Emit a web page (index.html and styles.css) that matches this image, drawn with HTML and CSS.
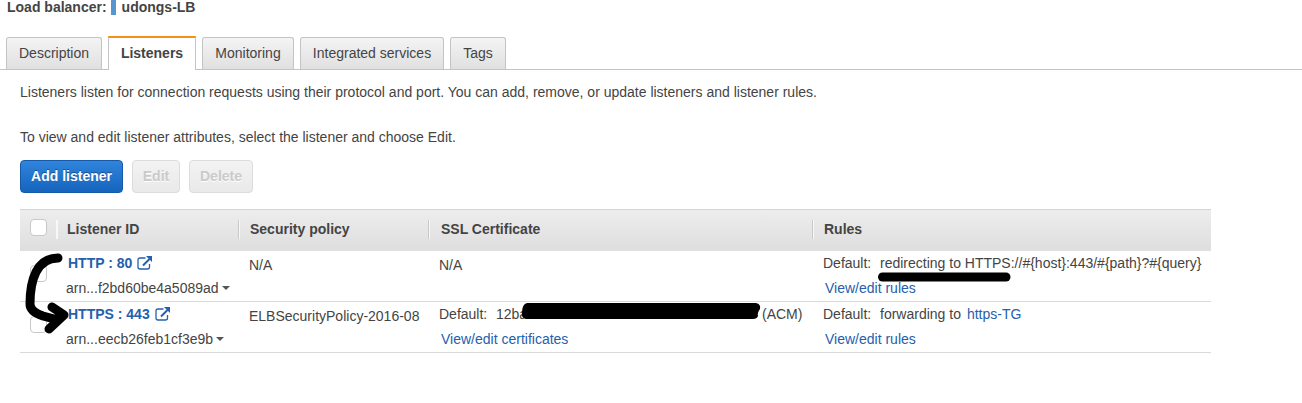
FILE: index.html
```html
<!DOCTYPE html>
<html lang="en">
<head>
<meta charset="utf-8">
<title>Load balancer listeners</title>
<link rel="stylesheet" href="styles.css">
</head>
<body>
<header class="heading"><span>Load balancer:</span><i class="marker"></i><span>udongs-LB</span></header>
<nav class="tabs">
  <a class="tab tab-description">Description</a>
  <a class="tab tab-active">Listeners</a>
  <a class="tab tab-monitoring">Monitoring</a>
  <a class="tab tab-services">Integrated services</a>
  <a class="tab tab-tags">Tags</a>
</nav>
<main class="content">
  <p class="intro">Listeners listen for connection requests using their protocol and port. You can add, remove, or update listeners and listener rules.</p>
  <p class="intro hint">To view and edit listener attributes, select the listener and choose Edit.</p>
  <div class="actions">
    <button class="btn primary">Add listener</button>
    <button class="btn edit" disabled>Edit</button>
    <button class="btn delete" disabled>Delete</button>
  </div>
  <section class="table">
    <div class="row head">
      <div class="check"><span class="box"></span></div>
      <div class="th first">Listener ID</div>
      <div class="th">Security policy</div>
      <div class="th ssl">SSL Certificate</div>
      <div class="th">Rules</div>
    </div>
    <div class="row">
      <div class="check"><span class="box"></span></div>
      <div class="cell id-cell">
        <div class="line id"><a class="name">HTTP : 80</a><svg class="ext" viewBox="0 0 16 14"><path d="M8.500 2H3Q1 2 1 4V11Q1 13 3 13H10.500Q12.500 13 12.500 11V8" /><path class="shaft" d="M6 9.500L12.500 3"/><path class="solid" d="M9 0H15V6Z"/></svg></div>
        <div class="line"><span>arn...f2bd60be4a5089ad</span><i class="caret"></i></div>
      </div>
      <div class="cell"><div class="line plain">N/A</div></div>
      <div class="cell"><div class="line plain">N/A</div></div>
      <div class="cell">
        <div class="line"><span class="label">Default:</span><span>redirecting to HTTPS://#{host}:443/#{path}?#{query}</span></div>
        <div class="line link"><a>View/edit rules</a></div>
      </div>
    </div>
    <div class="row">
      <div class="check"><span class="box"></span></div>
      <div class="cell id-cell">
        <div class="line id"><a class="name">HTTPS : 443</a><svg class="ext" viewBox="0 0 16 14"><path d="M8.500 2H3Q1 2 1 4V11Q1 13 3 13H10.500Q12.500 13 12.500 11V8" /><path class="shaft" d="M6 9.500L12.500 3"/><path class="solid" d="M9 0H15V6Z"/></svg></div>
        <div class="line"><span>arn...eecb26feb1cf3e9b</span><i class="caret"></i></div>
      </div>
      <div class="cell"><div class="line plain">ELBSecurityPolicy-2016-08</div></div>
      <div class="cell">
        <div class="line"><span class="label">Default:</span><span class="cert">12ba</span><span>(ACM)</span></div>
        <div class="line link"><a>View/edit certificates</a></div>
      </div>
      <div class="cell">
        <div class="line"><span class="label">Default:</span><span>forwarding to</span><a class="target">https-TG</a></div>
        <div class="line link"><a>View/edit rules</a></div>
      </div>
    </div>
  </section>
</main>
<svg class="ink" viewBox="0 0 1302 403">
  <path class="arrow" d="M58 258C47 258 40 264 36 272C31 282 30 292 30 304C30 311 37 314 43 316L58 320M52 307L64 315L49 329"/>
  <path class="underline" d="M882.500 277L1006 277"/>
  <path class="redaction" d="M527 303H756Q761 304 760 309Q757 313 758 316Q757 319 753 319H526Q521 318 522 313Q522 304 527 303Z"/>
</svg>
</body>
</html>
```
FILE: styles.css
```css
* { box-sizing: border-box; }
body {
  margin: 0;
  height: 403px;
  overflow: hidden;
  background: #fff;
  color: #444;
  font: 14px/20px "Liberation Sans", Arial, sans-serif;
}
a { color: #2560ad; }
.heading {
  display: flex;
  height: 36px;
  padding-left: 7px;
  font-weight: 700;
  line-height: 15px;
}
.marker { width: 5px; height: 15px; margin: 0 6px 0 4px; background: #5795d0; }
.tabs {
  display: flex;
  align-items: flex-end;
  gap: 6px;
  height: 34px;
  padding-left: 6px;
  border-bottom: 1px solid #c4c4c4;
}
.tab {
  height: 32px;
  border: 1px solid #c4c4c4;
  border-bottom: 0;
  border-radius: 3px 3px 0 0;
  background: linear-gradient(#f4f4f4, #e0e0e0);
  color: #444;
  line-height: 31px;
  text-align: center;
}
.tab-description { width: 96px; }
.tab-monitoring { width: 92px; }
.tab-services { width: 144px; }
.tab-tags { width: 56px; }
.tab-active {
  width: 88px;
  height: 34px;
  margin-bottom: -1px;
  border-top: 2px solid #f29111;
  border-radius: 0;
  background: #fff;
  font-weight: 700;
}
.content { padding: 12px 0 0 20px; }
.intro { margin: 0; }
.hint { margin-top: 25px; }
.actions { display: flex; gap: 9px; margin-top: 13px; }
.btn {
  height: 33px;
  padding: 0;
  border: 1px solid #dcdcdc;
  border-radius: 4px;
  background: linear-gradient(#f3f3f3, #e9e9e9);
  color: #cacaca;
  font: 700 14px/29px "Liberation Sans", Arial, sans-serif;
  text-shadow: 0 1px #fff;
}
.primary {
  width: 103px;
  border-color: #1659a8;
  background: linear-gradient(#3084dc, #1564bd);
  color: #fff;
  text-shadow: 0 -1px #145096;
}
.edit { width: 48px; }
.delete { width: 64px; }
.table { width: 1191px; margin-top: 16px; }
.row {
  display: grid;
  grid-template-columns: 36px 182px 190px 384px 399px;
  height: 51px;
  border-bottom: 1px solid #d9d9d9;
}
.head {
  height: 42px;
  border-top: 1px solid #d5d5d5;
  border-bottom: 0;
  background: linear-gradient(#ededed, #dedede);
}
.th {
  height: 19px;
  margin-top: 10px;
  padding-left: 11px;
  border-left: 1px solid #c8c8c8;
  box-shadow: inset 1px 0 #f8f8f8;
  font-weight: 700;
  line-height: 19px;
}
.th.first { padding-left: 10px; border-color: #f8f8f8; }
.th.ssl { padding-left: 12px; }
.box {
  display: block;
  width: 17px;
  height: 17px;
  margin: 14px 0 0 10px;
  border: 1px solid #c8c8c8;
  border-radius: 4px;
  background: #fff;
}
.head .box { margin-top: 9px; }
.cell { margin-top: -1px; padding-left: 11px; white-space: nowrap; }
.id-cell { padding-left: 10px; }
.line { display: flex; align-items: center; height: 25px; }
.line.id { padding-left: 2px; }
.line.plain { height: 29px; }
.line.link { padding-left: 2px; }
.name { font-weight: 700; }
.ext {
  width: 16px;
  height: 14px;
  margin-left: 5px;
  fill: none;
  stroke: #2560ad;
  stroke-width: 1.300;
}
.ext .shaft { stroke-width: 2; }
.ext .solid { fill: #2560ad; stroke: none; }
.caret {
  margin: 1px 0 0 3px;
  border: solid transparent;
  border-width: 4px 4px 0;
  border-top-color: #555;
}
.label { width: 57px; }
.cert { width: 266px; }
.target { margin-left: 6px; }
.ink {
  position: absolute;
  top: 0;
  left: 0;
  width: 1302px;
  height: 403px;
  fill: none;
  stroke: #000;
  stroke-linecap: round;
  stroke-linejoin: round;
  pointer-events: none;
}
.arrow { stroke-width: 9; }
.underline { stroke-width: 9; }
.redaction { fill: #000; stroke: none; }
```
